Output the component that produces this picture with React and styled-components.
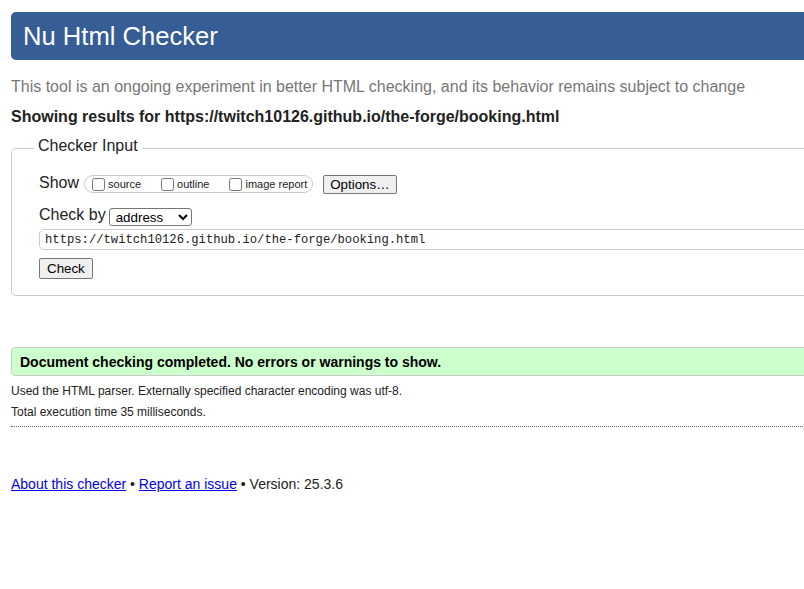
import React from "react";
import styled, { createGlobalStyle } from "styled-components";

const GlobalStyle = createGlobalStyle`
  html, body {
    margin: 0;
    overflow: hidden;
    background: #fff;
  }
  body {
    font-family: "Liberation Sans", Arial, sans-serif;
    color: #222;
  }
`;

const Page = styled.div`
  width: 1100px;
  padding: 12px 0 0 11px;
`;

const Title = styled.h1`
  margin: 0;
  height: 48px;
  line-height: 48px;
  padding-left: 12px;
  background: #365d95;
  color: #fff;
  font-size: 25.6px;
  font-weight: normal;
  border-radius: 5px;
`;

const Intro = styled.p`
  margin: 18px 0 0;
  font-size: 16px;
  line-height: 18px;
  color: #777;
`;

const ResultsFor = styled.p`
  margin: 12px 0 0;
  font-size: 16px;
  line-height: 18px;
  font-weight: bold;
  color: #222;
`;

const Fieldset = styled.fieldset`
  margin: 11px 0 0;
  padding: 0 27px 16px;
  border: 1px solid #ccc;
  border-radius: 5px;
  min-width: 0;
`;

const Legend = styled.legend`
  margin-left: -5px;
  padding: 0 4px 4px;
  font-size: 16px;
  line-height: 18px;
  color: #222;
`;

const Row = styled.div`
  display: flex;
  align-items: center;
  gap: ${(p) => p.$gap}px;
  height: ${(p) => p.$h}px;
  margin-top: ${(p) => p.$top}px;
`;

const RowLabel = styled.span`
  font-size: 16px;
  line-height: 16px;
  padding-bottom: ${(p) => p.$lift}px;
`;

const CheckGroup = styled.div`
  display: flex;
  align-items: center;
  gap: 20px;
  height: 18px;
  box-sizing: border-box;
  padding: 0 5px 0 7px;
  border: 1px solid #ccc;
  border-radius: 9px;
`;

const CheckOption = styled.label`
  display: inline-flex;
  align-items: center;
  font-size: 11px;
  line-height: 16px;
  color: #222;
`;

const Checkbox = styled.input`
  width: 13px;
  height: 13px;
  margin: 0 3px 0 0;
`;

const Button = styled.button`
  font-family: "Liberation Sans", Arial, sans-serif;
  font-size: 13.33px;
  line-height: normal;
  color: #000;
  background: #efefef;
  border: 1px solid #767676;
  border-radius: 2px;
  padding: ${(p) => (p.$roomy ? "2px 7px" : "1px 6px")};
  margin-left: ${(p) => p.$left || 0}px;
`;

const Select = styled.select`
  width: 83px;
  height: 18px;
  padding: 0 0 0 2px;
  font-family: "Liberation Sans", Arial, sans-serif;
  font-size: 13.33px;
  color: #000;
  background: #fff;
  border: 1px solid #767676;
  border-radius: 3px;
`;

const UrlInput = styled.input`
  display: block;
  box-sizing: border-box;
  width: 100%;
  height: 21px;
  margin: 3px 0 0;
  padding: 0 5px;
  font-family: "Liberation Mono", "DejaVu Sans Mono", monospace;
  font-size: 12.2px;
  color: #222;
  border: 1px solid #ccc;
  border-radius: 5px;
`;

const ButtonRow = styled.div`
  margin-top: 8px;
  display: flex;
`;

const Status = styled.div`
  margin-top: 51px;
  height: 29px;
  box-sizing: border-box;
  padding: 0 8px;
  border: 1px solid #ccc;
  border-radius: 4px;
  background: #ccffcc;
  font-size: 14px;
  font-weight: bold;
  line-height: 28px;
  color: #000;
`;

const Info = styled.p`
  margin: ${(p) => p.$top}px 0 0;
  font-size: 12px;
  line-height: 14px;
  color: #222;
`;

const Divider = styled.hr`
  margin: 7px 0 0;
  height: 0;
  border: 0;
  border-top: 1px dotted #666;
`;

const Footer = styled.p`
  margin: 49px 0 0;
  font-size: 14px;
  line-height: 16px;
  color: #222;

  a {
    color: #0000ee;
    text-decoration: underline;
  }
`;

export default function App() {
  const url = "https://twitch10126.github.io/the-forge/booking.html";

  return (
    <Page>
      <GlobalStyle />
      <Title>Nu Html Checker</Title>
      <Intro>
        This tool is an ongoing experiment in better HTML checking, and its
        behavior remains subject to change
      </Intro>
      <ResultsFor>Showing results for {url}</ResultsFor>

      <Fieldset>
        <Legend>Checker Input</Legend>
        <Row $gap={5} $h={20} $top={15}>
          <RowLabel $lift={3}>Show</RowLabel>
          <CheckGroup>
            <CheckOption>
              <Checkbox type="checkbox" />
              source
            </CheckOption>
            <CheckOption>
              <Checkbox type="checkbox" />
              outline
            </CheckOption>
            <CheckOption>
              <Checkbox type="checkbox" />
              image report
            </CheckOption>
          </CheckGroup>
          <Button $left={5}>Options…</Button>
        </Row>
        <Row $gap={3} $h={18} $top={14}>
          <RowLabel $lift={4}>Check by</RowLabel>
          <Select defaultValue="address">
            <option value="address">address</option>
            <option value="file">file upload</option>
            <option value="text">text input</option>
          </Select>
        </Row>
        <UrlInput type="url" defaultValue={url} />
        <ButtonRow>
          <Button $roomy>Check</Button>
        </ButtonRow>
      </Fieldset>

      <Status>Document checking completed. No errors or warnings to show.</Status>
      <Info $top={8}>
        Used the HTML parser. Externally specified character encoding was utf-8.
      </Info>
      <Info $top={7}>Total execution time 35 milliseconds.</Info>
      <Divider />

      <Footer>
        <a href="#about">About this checker</a> • <a href="#issue">Report an issue</a> •
        Version: 25.3.6
      </Footer>
    </Page>
  );
}
